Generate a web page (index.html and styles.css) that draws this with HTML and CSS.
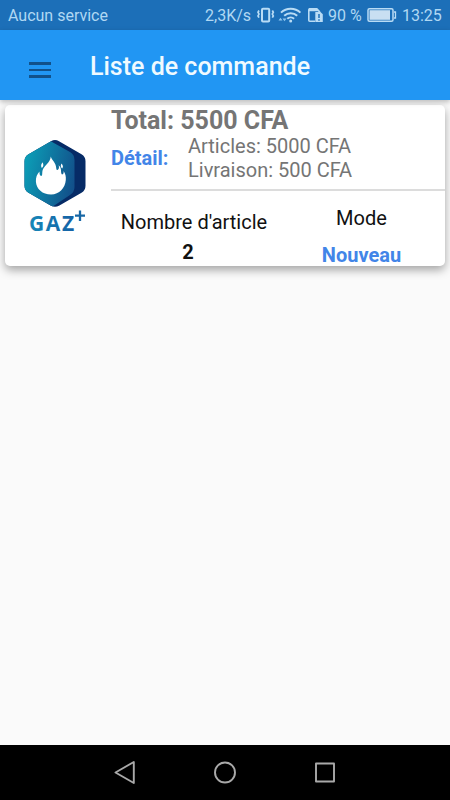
FILE: index.html
```html
<!DOCTYPE html>
<html lang="fr">
<head>
    <meta charset="UTF-8">
    <meta name="viewport" content="width=device-width, initial-scale=1.0">
    <title>Liste de commande</title>
    <link rel="stylesheet" href="styles.css">
</head>
<body>
    <div class="status-bar">
        <span class="carrier">Aucun service</span>
        <span class="speed">2,3K/s</span>
        <svg class="status-icons" width="66" height="30" viewBox="257 0 66 30">
            <!-- vibrate -->
            <rect x="262" y="8.800" width="7.200" height="12.600" rx="1" fill="none" stroke="#b9dcf5" stroke-width="2"/>
            <path d="M259 10.500l-1 1.800 1 1.800-1 1.800 1 1.800M272.300 10.500l1 1.800-1 1.800 1 1.800-1 1.800" fill="none" stroke="#b9dcf5" stroke-width="1.700"/>
            <!-- wifi -->
            <path d="M281 12.600a14 14 0 0 1 19.400 0M284.200 15.800a9.300 9.300 0 0 1 13 0M287.300 18.800a5 5 0 0 1 6.800 0" fill="none" stroke="#b9dcf5" stroke-width="2"/>
            <circle cx="290.700" cy="21" r="1.500" fill="#b9dcf5"/>
            <path d="M278.500 20.500l2-2.800 2 2.800zM282.500 18.500h4l-2 2.800z" fill="#8fc6ee"/>
            <!-- sim card -->
            <path d="M315 21.200h-5.200a1 1 0 0 1-1-1V9.800a1 1 0 0 1 1-1h6.700l3.500 3.400" fill="none" stroke="#b9dcf5" stroke-width="1.600"/>
            <path d="M309 8h8l3 3.300h-11z" fill="#b9dcf5"/>
            <path d="M315.300 12h5.200l2.300 2.200V22h-7.500z" fill="#b9dcf5"/>
            <path d="M319 14v4M319 19.300v1.500" stroke="#1c6fb8" stroke-width="1.500"/>
        </svg>
        <span class="percent">90 %</span>
        <svg class="battery" width="30" height="30" viewBox="367 0 30 30">
            <rect x="368" y="8.800" width="25" height="12.400" rx="1.500" fill="none" stroke="#b9dcf5" stroke-width="1.500"/>
            <rect x="369.500" y="10.200" width="20.500" height="9.600" fill="#c8dff2"/>
            <path d="M394 12h1.500v6H394" fill="none" stroke="#b9dcf5" stroke-width="1.300"/>
        </svg>
        <span class="clock">13:25</span>
    </div>

    <header class="app-bar">
        <div class="menu"><span></span><span></span><span></span></div>
        <h1>Liste de commande</h1>
    </header>

    <main class="content">
        <div class="card">
            <div class="logo">
                <svg width="70" height="110" viewBox="20 136 70 110">
                    <defs>
                        <linearGradient id="front" x1="0" y1="0.3" x2="1" y2="0.6">
                            <stop offset="0" stop-color="#0ba5bb"/>
                            <stop offset="1" stop-color="#12508a"/>
                        </linearGradient>
                        <linearGradient id="brand" x1="0" y1="0" x2="1" y2="0">
                            <stop offset="0" stop-color="#1788b8"/>
                            <stop offset="1" stop-color="#1560a5"/>
                        </linearGradient>
                        <clipPath id="hexagon">
                            <path d="M51 141.200q4-2.300 8 0l22.500 13q4 2.300 4 7v24.500q0 4.700-4 7l-22.500 13q-4 2.300-8 0l-22.500-13q-4-2.300-4-7v-24.500q0-4.700 4-7z"/>
                        </clipPath>
                    </defs>
                    <g clip-path="url(#hexagon)">
                        <rect x="24" y="138" width="63" height="70" fill="#062b66"/>
                        <path d="M20 138h25l25 14q4.500 2.500 4.500 8v27q0 5-4.500 8l-21 14H20z" fill="url(#front)"/>
                    </g>
                    <path d="M50.800 156.500c.7 3.500 5.300 6 5.500 12 .1 1.600 1.200 2.100 2.200.6.700-1.200.5-2.500.1-3.900 3 2.200 2.300 5.800 2.700 8 .3 1.500 1.500 1.500 2.100.4.400-.8.300-1.800.1-2.600 2 2.500 2.600 5.700 2.300 9-.7 8-6.400 14.500-14.700 14.500-8.600 0-14.800-5.400-15.200-13-.2-4 1-7.300 3.600-10-.1 2.600.5 4.500 1.700 4.400 1.600-.1.600-3 1.500-5.900 1.300-4.300 7.500-7 8.100-13.500z" fill="#fff"/>
                    <path d="M42.600 162.200c1.400 3 .7 4.500-.8 5.800-1.200-2-.8-4 .8-5.800zM61.500 163.500c1.800 2 1.800 3.500.7 5-1.600-1.300-1.900-3-.7-5z" fill="#fff"/>
                    <text class="brand" x="29" y="231" fill="url(#brand)">GAZ</text>
                    <path d="M80 210.500v10.500M75 215.700h10" stroke="#1767a5" stroke-width="2.300"/>
                </svg>
            </div>
            <div class="info">
                <div class="total">Total: 5500 CFA</div>
                <div class="detail">
                    <span class="detail-label">Détail:</span>
                    <div class="detail-lines">
                        <div>Articles: 5000 CFA</div>
                        <div>Livraison: 500 CFA</div>
                    </div>
                </div>
                <div class="bottom">
                    <div class="count">
                        <div>Nombre d'article</div>
                        <div class="count-value">2</div>
                    </div>
                    <div class="mode">
                        <div>Mode</div>
                        <div class="mode-value">Nouveau</div>
                    </div>
                </div>
            </div>
        </div>
    </main>

    <nav class="nav-bar">
        <svg width="450" height="55" viewBox="0 0 450 55" fill="none" stroke="#a9a9a9" stroke-width="1.900" stroke-linejoin="round">
            <path d="M133.800 17v21L115.500 27.500z"/>
            <circle cx="225" cy="27.500" r="10"/>
            <rect x="316" y="18.500" width="18" height="18"/>
        </svg>
    </nav>
</body>
</html>
```
FILE: styles.css
```css
* { margin: 0; padding: 0; box-sizing: border-box; }
body { width: 450px; height: 800px; display: flex; flex-direction: column; overflow: hidden; background: #fafafa; font-family: Roboto, sans-serif; white-space: nowrap; }

.status-bar { flex: none; height: 30px; display: flex; align-items: center; padding: 0 8px; background: #1c6fb8; color: #b0d8f3; font-size: 16px; line-height: 30px; }
.status-bar svg { flex: none; }
.status-bar span { padding-top: 1px; }
.carrier { width: 197px; }
.speed { width: 52px; }
.status-icons { margin-right: 5px; }
.percent { width: 39px; }
.battery { margin-right: 5px; }

.app-bar { flex: none; height: 70px; display: flex; align-items: center; padding: 0 29px; background: #2196f3; box-shadow: 0 2px 5px rgba(0, 0, 0, 0.25); z-index: 1; }
.menu { width: 22px; margin: 10px 39px 0 0; display: flex; flex-direction: column; gap: 4px; }
.menu span { height: 2.5px; background: #11518a; }
h1 { font-size: 25px; font-weight: 500; line-height: 30px; margin-top: 3px; color: #f0faff; }

.content { flex: 1; padding: 5px; }
.card { height: 161px; display: flex; background: #fff; border-radius: 5px; box-shadow: 0 4px 10px rgba(0, 0, 0, 0.35); }
.logo { width: 106px; padding: 31px 15px 0; }
.brand { font-family: "Open Sans", sans-serif; font-size: 21px; font-weight: 700; letter-spacing: 1.6px; }
.info { flex: 1; }
.total { height: 29px; font-size: 25px; font-weight: 700; line-height: 32px; color: #757575; }
.detail { height: 57px; display: flex; border-bottom: 2px solid #dcdcdc; color: #757575; font-size: 20px; line-height: 24px; }
.detail-label { width: 77px; padding-top: 12px; color: #4285e8; font-weight: 700; }
.bottom { display: flex; color: #111; font-size: 20px; text-align: center; line-height: 24px; }
.count { width: 166px; padding-top: 19px; }
.count-value { margin: 6px 12px 0 0; font-weight: 700; }
.mode { flex: 1; padding: 15px 0 0 1px; }
.mode-value { margin-top: 13px; color: #4285e8; font-weight: 700; }

.nav-bar { flex: none; height: 55px; background: #000; }
```
